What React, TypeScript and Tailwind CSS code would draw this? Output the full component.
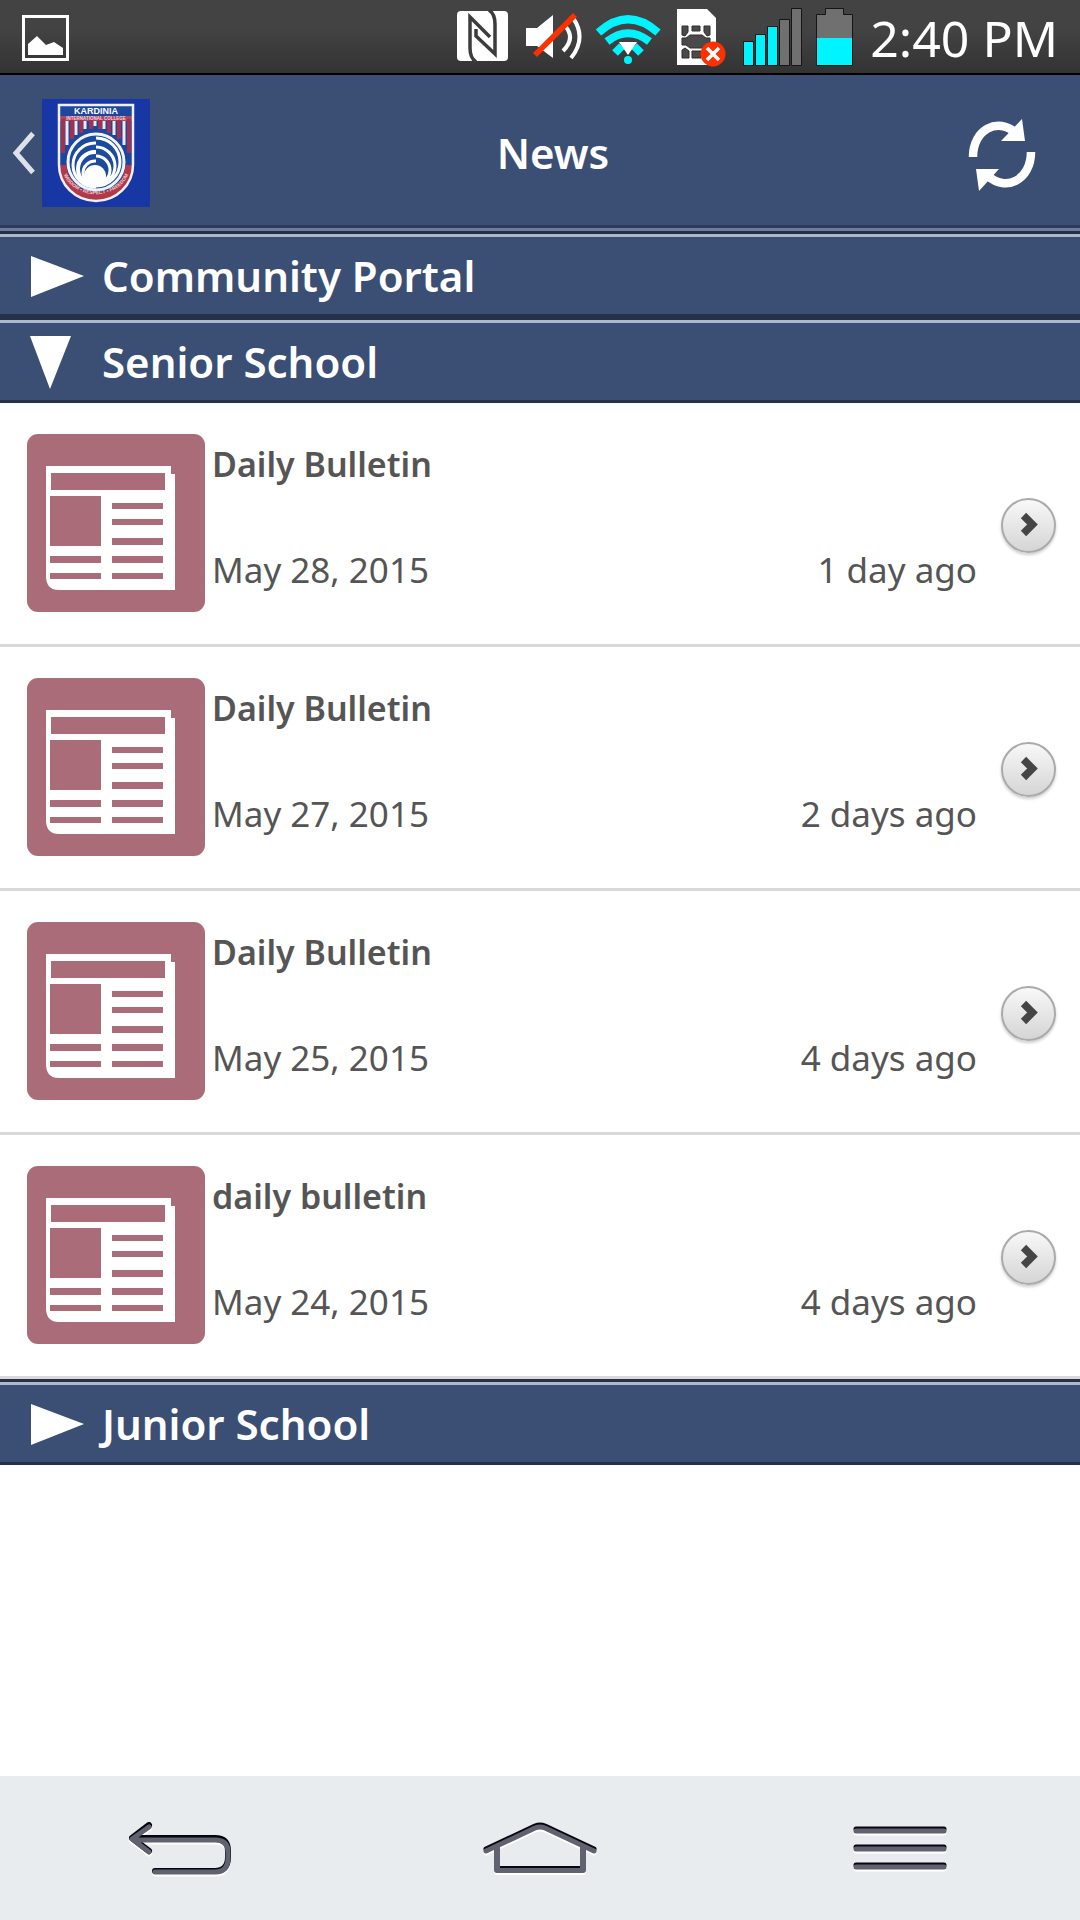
import { useState } from "react";

type Bulletin = { id: number; title: string; date: string; ago: string };
type Section = { name: string; items: Bulletin[] };

const sections: Section[] = [
  { name: "Community Portal", items: [] },
  {
    name: "Senior School",
    items: [
      { id: 1, title: "Daily Bulletin", date: "May 28, 2015", ago: "1 day ago" },
      { id: 2, title: "Daily Bulletin", date: "May 27, 2015", ago: "2 days ago" },
      { id: 3, title: "Daily Bulletin", date: "May 25, 2015", ago: "4 days ago" },
      { id: 4, title: "daily bulletin", date: "May 24, 2015", ago: "4 days ago" },
    ],
  },
  { name: "Junior School", items: [] },
];

function NfcIcon() {
  return (
    <svg width="56" height="74" viewBox="0 0 56 74" aria-hidden="true">
      <rect x="1" y="11" width="51" height="50" rx="4" fill="#fff" />
      <path d="M20 62 Q14 58 14 48 V17 L34 37" fill="none" stroke="#3c3c3c" strokeWidth="3.5" />
      <path d="M33 10 Q39 14 39 24 V54 L20 36 V29" fill="none" stroke="#3c3c3c" strokeWidth="3.5" />
    </svg>
  );
}

function MuteIcon() {
  return (
    <svg width="60" height="74" viewBox="0 0 60 74" aria-hidden="true">
      <path d="M2 28 H13 L29 15 V58 L13 46 H2 Z" fill="#fff" />
      <path d="M41 26 Q52 38 39 51 M49 18 Q63 38 47 58" fill="none" stroke="#fff" strokeWidth="4" />
      <path d="M11 55 L51 15" stroke="#ff3000" strokeWidth="5.5" />
    </svg>
  );
}

function WifiIcon() {
  return (
    <svg width="68" height="74" viewBox="0 0 68 74" aria-hidden="true">
      <g fill="none" stroke="#00f4ff" strokeWidth="8">
        <path d="M2.5 32.5 Q32 6 62 32.5" />
        <path d="M11 41.5 Q32 25 53.5 41.5" />
        <path d="M19 53 L26 46 M45 53 L38 46" />
      </g>
      <path d="M23 42 H41 L32 55 Z" fill="#fff" />
      <circle cx="32" cy="60" r="4" fill="#00f4ff" />
    </svg>
  );
}

function SimErrorIcon() {
  return (
    <svg width="54" height="74" viewBox="0 0 54 74" aria-hidden="true">
      <path d="M1 9 H31 L40 18 V65 H1 Z" fill="#fff" />
      <path
        d="M6 26 H12 V32 L9 36 L6 35 Z M16 26 H24 V31 H16 Z M28 26 H34 V35 L31 36 L28 32 Z M6 38 H10 L14 35 H26 L30 38 H34 V45 H30 L26 48 H14 L10 45 H6 Z M6 58 V50 L9 48 L13 51 V58 Z M16 51 H25 V58 H16 Z"
        fill="#4a4a4a"
        stroke="#2f2f2f"
      />
      <circle cx="37" cy="54" r="12.5" fill="#ff3000" />
      <path d="M31 48 L43 60 M43 48 L31 60" stroke="#fff" strokeWidth="3.5" />
    </svg>
  );
}

function SignalIcon() {
  return (
    <svg width="60" height="74" viewBox="0 0 60 74" aria-hidden="true">
      <g stroke="#151515">
        <path d="M1.5 41.5 h10 v24 h-10 z M13.5 34.5 h10 v31 h-10 z M25.5 26.5 h10 v39 h-10 z" fill="#00f4ff" />
        <path d="M37.5 19.5 h10 v46 h-10 z M49.5 8.5 h10 v57 h-10 z" fill="#707070" />
      </g>
    </svg>
  );
}

function BatteryIcon() {
  return (
    <svg width="42" height="74" viewBox="0 0 42 74" aria-hidden="true">
      <path d="M2.5 14.5 H11.5 V8.5 H29.5 V14.5 H38.5 V65.5 H2.5 Z" fill="#707070" stroke="#151515" />
      <rect x="3" y="38" width="35" height="27" fill="#00f4ff" />
    </svg>
  );
}

function StatusBar() {
  return (
    <div className="flex h-[75px] items-start justify-between border-b-2 border-black bg-gradient-to-b from-[#434343] from-40% to-[#333333] px-[22px]">
      <svg width="47" height="74" viewBox="0 0 47 74" aria-hidden="true">
        <rect x="1.5" y="16.5" width="44" height="43" fill="none" stroke="#fff" strokeWidth="3" />
        <path d="M6 55 V44 L15 36 L24 45 L32 42 L41 48 V55 Z" fill="#fff" />
      </svg>
      <div className="flex items-start gap-3">
        <NfcIcon />
        <MuteIcon />
        <WifiIcon />
        <SimErrorIcon />
        <SignalIcon />
        <BatteryIcon />
        <span className="pl-0.5 text-[50px] leading-[76px] whitespace-nowrap text-white">2:40 PM</span>
      </div>
    </div>
  );
}

function SchoolCrest() {
  return (
    <svg width="108" height="108" viewBox="0 0 108 108" role="img" aria-label="Kardinia International College">
      <defs>
        <clipPath id="shield">
          <path d="M17 6 H91 V66 A37 36 0 0 1 17 66 Z" />
        </clipPath>
        <clipPath id="globe-left">
          <rect x="24" y="30" width="30" height="64" />
        </clipPath>
        <clipPath id="globe-right">
          <rect x="54" y="30" width="32" height="64" />
        </clipPath>
        <path id="motto" d="M20 70 A34.5 30.5 0 0 0 88 70" />
      </defs>
      <rect width="108" height="108" fill="#1737a5" />
      <path d="M17 6 H92 V67 A37 36 0 0 1 19 69 Z" fill="#10277a" />
      <g clipPath="url(#shield)">
        <rect x="17" y="6" width="74" height="98" fill="#1c469f" />
        <rect x="17" y="17" width="74" height="5" fill="#a9465c" />
        <path d="M21 20 V54 M30 20 V40 M39 20 V34 M49 20 V30 M58 20 V30 M67 20 V34 M77 20 V40 M87 20 V54" stroke="#a5304a" strokeWidth="4" />
        <path d="M25 22 V46 M34 22 V36 M43 22 V30 M53 22 V27 M62 22 V30 M72 22 V36 M82 22 V46" stroke="#e9ecf8" strokeWidth="3" />
        <path d="M20 66 A34 32 0 0 0 88 66" fill="none" stroke="#b23a48" strokeWidth="9" />
      </g>
      <circle cx="54" cy="63" r="28" fill="#1c4a9c" stroke="#f2f4fc" strokeWidth="3" />
      <g fill="none" stroke="#fff" strokeWidth="3">
        <g clipPath="url(#globe-left)">
          <circle cx="53" cy="66" r="22" />
          <circle cx="53" cy="70" r="17" strokeWidth="4" />
          <circle cx="53" cy="74" r="12" />
        </g>
        <g clipPath="url(#globe-right)">
          <circle cx="54" cy="63" r="24" />
          <circle cx="54" cy="67" r="19" />
          <circle cx="54" cy="71" r="14" />
        </g>
      </g>
      <circle cx="53" cy="77" r="11" fill="#fff" />
      <path d="M17 6 H91 V66 A37 36 0 0 1 17 66 Z" fill="none" stroke="#eef0fa" strokeWidth="2.5" />
      <g className="font-['Liberation_Sans',sans-serif] font-bold" textAnchor="middle">
        <text x="54" y="15" fontSize="9" fill="#fff">KARDINIA</text>
        <text x="54" y="21" fontSize="4.5" fill="#f3d5dc">INTERNATIONAL COLLEGE</text>
        <text fontSize="5" fill="#f3c9cc">
          <textPath href="#motto" startOffset="50%">WISDOM • RESPECT • FREEDOM</textPath>
        </text>
      </g>
    </svg>
  );
}

function AppHeader() {
  return (
    <header className="border-b-[3px] border-[#6d7b9f]">
      <div className="grid grid-cols-[150px_1fr_124px] items-center border-b-[3px] border-[#2d3a5a] bg-[#3b4f74] pt-6 pb-[18px]">
        <button type="button" aria-label="Back" className="flex items-center gap-1 pl-3">
          <svg width="26" height="44" viewBox="0 0 26 44" aria-hidden="true">
            <path d="M21 2.5 L4 22 L21 41.5" fill="none" stroke="#dde2ea" strokeWidth="5" />
          </svg>
          <SchoolCrest />
        </button>
        <h1 className="text-center text-[42px] leading-[60px] font-semibold text-white">News</h1>
        <button type="button" aria-label="Refresh" className="justify-self-end pt-1 pr-11">
          <svg width="68" height="74" viewBox="0 0 68 74" aria-hidden="true">
            <g fill="none" stroke="#fff" strokeWidth="8.5">
              <path d="M5 39 C5 11 30 -1 48 15" />
              <path d="M63 34 C63 62 38 74 20 58" />
            </g>
            <path d="M54 1 L57 23 H33 Z M11 73 L8 51 H31 Z" fill="#fff" />
          </svg>
        </button>
      </div>
    </header>
  );
}

function NewspaperIcon() {
  return (
    <svg width="178" height="178" viewBox="0 0 178 178" className="shrink-0" aria-hidden="true">
      <rect width="178" height="178" rx="11" fill="#a96c78" />
      <path d="M19 32 H144 V40 H148 V156 H32 Q19 156 19 142 Z" fill="#fff" />
      <path
        d="M24 39 H138 V56 H24 Z M23 62 H74 V112 H23 Z M85 69 h51 v6 h-51 z M85 85 h51 v6 h-51 z M85 104 h51 v7 h-51 z M85 122 h51 v7 h-51 z M85 139 h51 v6 h-51 z M23 122 h51 v7 h-51 z M23 139 h51 v6 h-51 z"
        fill="#a96c78"
      />
    </svg>
  );
}

function BulletinRow({ item }: { item: Bulletin }) {
  return (
    <li className="border-b-[3px] border-[#d9d9d9]">
      <a href={`#bulletin-${item.id}`} className="flex items-center pt-[31px] pr-6 pb-8 pl-[27px] text-[#555555]">
        <NewspaperIcon />
        <div className="flex flex-1 flex-col gap-14 pr-6 pb-3 pl-[7px]">
          <h3 className="text-[34px] leading-[49px] font-semibold">{item.title}</h3>
          <div className="flex justify-between text-[35px] leading-[49px]">
            <span>{item.date}</span>
            <span>{item.ago}</span>
          </div>
        </div>
        <span className="mt-1 flex size-[55px] items-center justify-center rounded-full border-2 border-[#aaaaaa] bg-gradient-to-b from-[#f8f8f8] to-[#d5d5d5] shadow-[0_2px_3px_rgba(0,0,0,0.2)]">
          <svg width="18" height="26" viewBox="0 0 18 26" aria-hidden="true">
            <path d="M3.5 3.5 L12.5 12.5 L3.5 21.5" fill="none" stroke="#454545" strokeWidth="7.5" />
          </svg>
        </span>
      </a>
    </li>
  );
}

function SectionHeader({ name, open, onToggle }: { name: string; open: boolean; onToggle: () => void }) {
  return (
    <h2 className="border-y-[3px] border-[#253148]">
      <button
        type="button"
        aria-expanded={open}
        onClick={onToggle}
        className="flex h-20 w-full items-center border-t-[3px] border-[#adb8cd] bg-[#3b4f74] pl-[30px] text-left text-[42px] leading-[60px] font-semibold text-white"
      >
        <span className="w-[72px]">
          <svg width="54" height="54" viewBox="0 0 54 54" aria-hidden="true">
            <path d={open ? "M0 1 H41 L20 54 Z" : "M1 7 L54 27 L1 48 Z"} fill="#fff" />
          </svg>
        </span>
        {name}
      </button>
    </h2>
  );
}

function NavBar() {
  const button = "flex h-36 items-center justify-center";
  const icon = "drop-shadow-[0_2px_0_#ffffff]";

  return (
    <nav className="grid grid-cols-3 bg-[#e8ecef]">
      <button type="button" aria-label="Back" className={button}>
        <svg width="106" height="56" viewBox="0 0 106 56" className={icon} aria-hidden="true">
          <g fill="none" strokeLinecap="round" strokeLinejoin="round">
            <path d="M22 5 L5 18 L22 31 M7 18 H88 Q101 18 101 31 V37 Q101 51 88 51 H28" stroke="#05070d" strokeWidth="6" />
            <path d="M22 7 L5 19 L22 32 M7 20 H88 Q101 20 101 32 V38 Q101 52 88 52 H28" stroke="#60626f" strokeWidth="5" />
          </g>
        </svg>
      </button>
      <button type="button" aria-label="Home" className={button}>
        <svg width="114" height="54" viewBox="0 0 114 54" className={icon} aria-hidden="true">
          <g fill="none" strokeLinecap="round" strokeLinejoin="round">
            <path d="M14 27 V49 H100 V27" stroke="#60626f" strokeWidth="6" />
            <path d="M3 28 L52 5 Q57 3 62 5 L111 28" stroke="#05070d" strokeWidth="5" />
            <path d="M3 30 L52 7 Q57 5 62 7 L111 30" stroke="#60626f" strokeWidth="5" />
            <path d="M17 46 H97" stroke="#05070d" strokeWidth="2" strokeLinecap="butt" />
          </g>
        </svg>
      </button>
      <button type="button" aria-label="Menu" className={button}>
        <svg width="94" height="44" viewBox="0 0 94 44" className={icon} aria-hidden="true">
          <g strokeWidth="5" strokeLinecap="round">
            <path d="M3 3 H91 M3 21 H91 M3 39 H91" stroke="#05070d" />
            <path d="M3 5 H91 M3 23 H91 M3 41 H91" stroke="#60626f" />
          </g>
        </svg>
      </button>
    </nav>
  );
}

export default function App() {
  const [openSection, setOpenSection] = useState<string | null>("Senior School");

  return (
    <div className="flex min-h-screen flex-col bg-white font-['Noto_Sans',sans-serif]">
      <StatusBar />
      <AppHeader />
      <main className="flex-1">
        {sections.map((section) => {
          const open = section.name === openSection;
          return (
            <section key={section.name}>
              <SectionHeader name={section.name} open={open} onToggle={() => setOpenSection(open ? null : section.name)} />
              {open && (
                <ul>
                  {section.items.map((item) => (
                    <BulletinRow key={item.id} item={item} />
                  ))}
                </ul>
              )}
            </section>
          );
        })}
      </main>
      <NavBar />
    </div>
  );
}
